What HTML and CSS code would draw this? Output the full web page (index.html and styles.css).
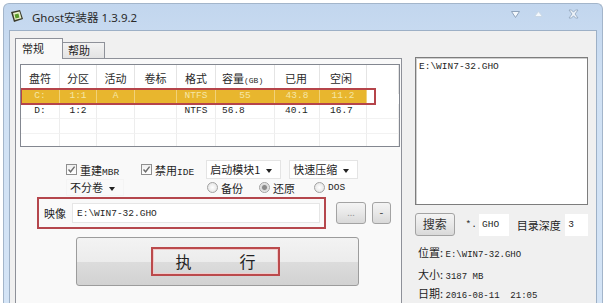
FILE: index.html
```html
<!DOCTYPE html>
<html lang="zh-CN">
<head>
    <meta charset="UTF-8">
    <title>Ghost安装器</title>
    <link rel="stylesheet" href="styles.css">
</head>
<body>
    <div class="window">
        <div class="titlebar">
            <svg class="app-icon" width="14" height="14" viewBox="0 0 14 14">
                <path d="M1 3 L10 1 L13 10 L4 13 Z" fill="#3a3a2a"/>
                <path d="M3 4 L9.5 2.6 L11.5 9.2 L4.8 11 Z" fill="#e8f0c8"/>
                <rect x="5" y="5" width="4" height="4" fill="#5a9a2a" transform="rotate(-14 7 7)"/>
            </svg>
            <span class="title">Ghost安装器 1.3.9.2</span>
            <div class="controls">
                <svg width="9" height="7" viewBox="0 0 9 7"><path d="M0.5 0.5 H8.5 L4.5 6.5 Z" fill="#f4f8fc" stroke="#8fa3bb"/></svg>
                <svg width="9" height="6" viewBox="0 0 9 6"><path d="M0.5 5.5 H8.5 L4.5 0.5 Z" fill="#f4f8fc" stroke="#c9d7e6"/></svg>
                <svg width="11" height="10" viewBox="0 0 11 10"><path d="M1 1 H3.5 L5.5 3.2 L7.5 1 H10 L7 5 L10 9 H7.5 L5.5 6.8 L3.5 9 H1 L4 5 Z" fill="#eef3f9" stroke="#8fa3bb" stroke-width="0.8"/></svg>
            </div>
        </div>

        <div class="client">
            <div class="left">
                <div class="tabs">
                    <span class="tab active">常规</span>
                    <span class="tab">帮助</span>
                </div>
                <div class="panel">
                    <div class="list">
                        <div class="row head">
                            <span>盘符</span><span>分区</span><span>活动</span><span>卷标</span><span>格式</span>
                            <span class="l6">容量<small>(GB)</small></span><span class="l">已用</span><span class="l">空闲</span><span></span>
                        </div>
                        <div class="row sel">
                            <span>C:</span><span>1:1</span><span>A</span><span></span><span>NTFS</span>
                            <span class="c">55</span><span class="c">43.8</span><span class="c">11.2</span><span class="tail"></span>
                        </div>
                        <div class="row">
                            <span>D:</span><span>1:2</span><span></span><span></span><span>NTFS</span>
                            <span class="l6">56.8</span><span class="l">40.1</span><span class="l">16.7</span><span></span>
                        </div>
                        <div class="row">
                            <span></span><span></span><span></span><span></span><span></span><span></span><span></span><span></span><span></span>
                        </div>
                        <div class="row">
                            <span></span><span></span><span></span><span></span><span></span><span></span><span></span><span></span><span></span>
                        </div>
                        <span class="mark"></span>
                    </div>

                    <div class="opt-row first">
                        <label class="check"><span class="box"><svg width="9" height="9" viewBox="0 0 9 9"><path d="M1.5 4.5 L3.6 6.8 L7.6 1.6" fill="none" stroke="#6d6d6d" stroke-width="1.4"/></svg></span><span>重建<i>MBR</i></span></label>
                        <label class="check second"><span class="box"><svg width="9" height="9" viewBox="0 0 9 9"><path d="M1.5 4.5 L3.6 6.8 L7.6 1.6" fill="none" stroke="#6d6d6d" stroke-width="1.4"/></svg></span><span>禁用<i>IDE</i></span></label>
                        <span class="combo w75">启动模块1</span>
                        <span class="combo w69">快速压缩</span>
                    </div>
                    <div class="opt-row">
                        <span class="combo w58">不分卷</span>
                        <label class="radio r1"><span class="dot"></span>备份</label>
                        <label class="radio r2"><span class="dot on"></span>还原</label>
                        <label class="radio r3"><span class="dot"></span><i>DOS</i></label>
                    </div>
                    <div class="image-row">
                        <div class="image-box">
                            <span class="image-label">映像</span>
                            <span class="field">E:\WIN7-32.GHO</span>
                        </div>
                        <span class="btn dots">...</span>
                        <span class="btn minus">-</span>
                    </div>
                    <div class="run">
                        <span class="run-mark">执　　　行</span>
                    </div>
                </div>
            </div>

            <div class="right">
                <div class="files">E:\WIN7-32.GHO</div>
                <div class="search-row">
                    <span class="btn search">搜索</span>
                    <span class="star">*.</span>
                    <span class="field-s ext">GHO</span>
                    <span class="depth">目录深度</span>
                    <span class="field-s num">3</span>
                </div>
                <div class="info"><b>位置</b>: <i>E:\WIN7-32.GHO</i></div>
                <div class="info"><b>大小</b>: <i>3187 MB</i></div>
                <div class="info"><b>日期</b>: <i>2016-08-11&nbsp;&nbsp;21:05</i></div>
            </div>
        </div>
    </div>
</body>
</html>
```

FILE: styles.css
```css
* {
    box-sizing: border-box;
}

body {
    margin: 0;
    background-color: #fff;
    font-family: "Noto Sans CJK SC", sans-serif;
    font-size: 11px;
    color: #1e1e1e;
    overflow: hidden;
}

i {
    font-style: normal;
    font-family: "Liberation Mono", monospace;
    font-size: 9px;
}

.window {
    margin: 3px 0 0 3px;
    width: 600px;
    height: 300px;
    padding: 0 5px;
    border: 1px solid #a3b5ca;
    border-bottom: none;
    border-radius: 6px 6px 0 0;
    background: linear-gradient(#c2d6ee, #d0e1f4 80px, #d4e4f6);
}

.titlebar {
    height: 26px;
    display: flex;
    align-items: center;
}

.app-icon {
    margin: -3px 0 0 1px;
}

.title {
    margin-left: 8px;
    font-family: "Noto Sans", "Noto Sans CJK SC", sans-serif;
    font-size: 11.5px;
    color: #2a2a2a;
}

.controls {
    margin-left: auto;
    margin-right: 18px;
    display: flex;
    align-items: center;
    margin-top: -6px;
}

.controls svg + svg {
    margin-left: 14px;
}

.controls svg:last-child {
    margin-left: 25px;
}

.client {
    height: 273px;
    overflow: hidden;
    border: 1px solid #9db0c6;
    border-bottom: none;
    background-color: #f0f0f0;
    display: flex;
    align-items: flex-start;
    padding: 7px 8px 0 5px;
}

.left {
    width: 387px;
}

.tabs {
    display: flex;
    align-items: flex-end;
    height: 20px;
}

.tab {
    width: 42px;
    height: 16px;
    line-height: 14px;
    padding-left: 5px;
    border: 1px solid #8e9199;
    border-bottom: none;
    border-left: none;
    background: linear-gradient(#f3f3f3, #e3e3e3);
}

.tab.active {
    width: 48px;
    height: 21px;
    margin-bottom: -1px;
    line-height: 18px;
    padding-left: 6px;
    border-left: 1px solid #8e9199;
    background: #f9f9f9;
    position: relative;
    z-index: 1;
}

.panel {
    height: 245px;
    border: 1px solid #8e9199;
    border-bottom: none;
    background-color: #f9f9f9;
    padding: 5px 0 0 4px;
}

.list {
    position: relative;
    width: 380px;
    height: 83px;
    border: 1px solid #838790;
    background-color: #fff;
    overflow: hidden;
}

.row {
    display: grid;
    grid-template-columns: 39px 37px 38px 42px 39px 59px 45px 47px 1fr;
    height: 15px;
    line-height: 14px;
    font-family: "Liberation Mono", monospace;
    font-size: 9.5px;
    text-align: center;
}

.row span {
    border-right: 1px solid #ededed;
    border-bottom: 1px solid #f2f2f2;
    white-space: nowrap;
}

.row .l6 {
    text-align: left;
    padding-left: 6px;
}

.row .l {
    text-align: left;
    padding-left: 10px;
}

.row.head {
    height: 24px;
    line-height: 26px;
    font-family: "Noto Sans CJK SC", sans-serif;
    font-size: 11px;
    color: #2a2a2a;
}

.row.head span {
    border-right-color: #e4e4e4;
    border-bottom: none;
}

.row.head small {
    font-family: "Liberation Mono", monospace;
    font-size: 8px;
}

.row.sel span {
    background-color: #e8b62e;
    color: #f6e6a6;
    border-right: 1px solid #f1d27a;
    border-bottom: none;
}

.row.sel .tail {
    background-color: #fff;
    border: none;
    margin: 2px 26px 3px 0;
}

.mark {
    position: absolute;
    left: -1px;
    top: 23px;
    width: 356px;
    height: 17px;
    border: 2px solid #b5444a;
}

.opt-row {
    display: flex;
    align-items: center;
    height: 17px;
    margin-left: 46px;
}

.opt-row.first {
    margin-top: 13px;
    height: 19px;
}

.check {
    display: flex;
    align-items: center;
}

.check i {
    font-size: 9.5px;
}

.check.second {
    margin-left: 22px;
}

.box {
    width: 11px;
    height: 11px;
    margin-right: 3px;
    border: 1px solid #8f8f8f;
    background: linear-gradient(#f0f0f0, #ffffff);
    display: flex;
    align-items: center;
    justify-content: center;
}

.combo {
    position: relative;
    height: 19px;
    line-height: 17px;
    padding-left: 3px;
    border: 1px solid #e4e4e4;
    background-color: #fff;
}

.combo::after {
    content: "";
    position: absolute;
    right: 8px;
    top: 8px;
    border: 3.5px solid transparent;
    border-top: 4px solid #222;
    border-bottom: none;
}

.w75 {
    width: 75px;
    margin-left: 12px;
}

.w69 {
    width: 69px;
    margin-left: 8px;
}

.w58 {
    width: 58px;
    height: 17px;
    line-height: 15px;
    border-color: #f4f4f4;
    background-color: #f9f9f9;
}

.w58::after {
    top: 7px;
}

.radio {
    display: flex;
    align-items: center;
}

.radio i {
    font-size: 9.5px;
}

.dot {
    width: 11px;
    height: 11px;
    margin-right: 3px;
    border: 1px solid #a2a2a2;
    border-radius: 50%;
    background: radial-gradient(#ffffff, #dedede);
}

.dot.on {
    background: radial-gradient(#8a8a8a 0 2px, #d8d8d8 3px, #f2f2f2 5px);
}

.r1 {
    margin-left: 83px;
}

.r2 {
    margin-left: 16px;
}

.r3 {
    margin-left: 19px;
}

.image-row {
    display: flex;
    align-items: center;
    margin: 1px 0 0 17px;
}

.image-box {
    width: 289px;
    height: 32px;
    border: 2px solid #b5474d;
    display: flex;
    align-items: center;
    padding-left: 5px;
}

.image-label {
    width: 28px;
}

.field {
    width: 248px;
    height: 20px;
    line-height: 19px;
    padding-left: 4px;
    border: 1px solid #e6e6e6;
    background-color: #fff;
    font-family: "Liberation Mono", monospace;
    font-size: 9.5px;
}

.btn {
    height: 22px;
    border: 1px solid #a3a3a3;
    border-radius: 3px;
    background: linear-gradient(#f4f4f4, #e8e8e8 50%, #d9d9d9);
    text-align: center;
    line-height: 19px;
    color: #9a9a9a;
}

.dots {
    width: 30px;
    margin-left: 10px;
    font-size: 9px;
}

.minus {
    width: 19px;
    margin-left: 6px;
    color: #333;
}

.run {
    width: 283px;
    height: 49px;
    margin: 8px 0 0 56px;
    border: 1px solid #9c9c9c;
    border-radius: 3px;
    background: linear-gradient(#f3f3f3, #ececec 50%, #dcdcdc 52%, #d2d2d2);
    display: flex;
    align-items: center;
    justify-content: center;
}

.run-mark {
    width: 129px;
    height: 29px;
    margin-right: 4px;
    border: 2px solid #bb4a4c;
    box-shadow: inset 0 0 0 1px #f0caca;
    text-align: center;
    line-height: 25px;
    font-size: 16px;
    color: #222;
}

.right {
    width: 173px;
    margin-left: 13px;
    margin-top: 19px;
}

.files {
    height: 148px;
    border: 1px solid #7d7d7d;
    box-shadow: inset 1px 1px 0 #cfcfcf;
    background-color: #fff;
    padding: 3px 0 0 3px;
    font-family: "Liberation Mono", monospace;
    font-size: 9.5px;
    line-height: 12px;
}

.search-row {
    display: flex;
    align-items: center;
    margin-top: 8px;
    height: 23px;
}

.search {
    width: 40px;
    height: 23px;
    font-size: 12px;
    color: #333;
    line-height: 20px;
}

.star {
    margin-left: 11px;
    font-family: "Liberation Mono", monospace;
    font-size: 9.5px;
}

.field-s {
    height: 22px;
    line-height: 21px;
    background-color: #fff;
    font-family: "Liberation Mono", monospace;
    font-size: 9.5px;
    padding-left: 3px;
}

.ext {
    width: 30px;
    margin-left: 2px;
}

.depth {
    margin-left: 8px;
    font-size: 11px;
    width: 49px;
}

.num {
    width: 23px;
}

.info {
    height: 22px;
    line-height: 22px;
    padding-left: 3px;
}

.search-row + .info {
    margin-top: 5px;
}

.info:last-child {
    height: 14px;
    line-height: 16px;
}

.info b {
    font-weight: normal;
    font-size: 11px;
}
```
